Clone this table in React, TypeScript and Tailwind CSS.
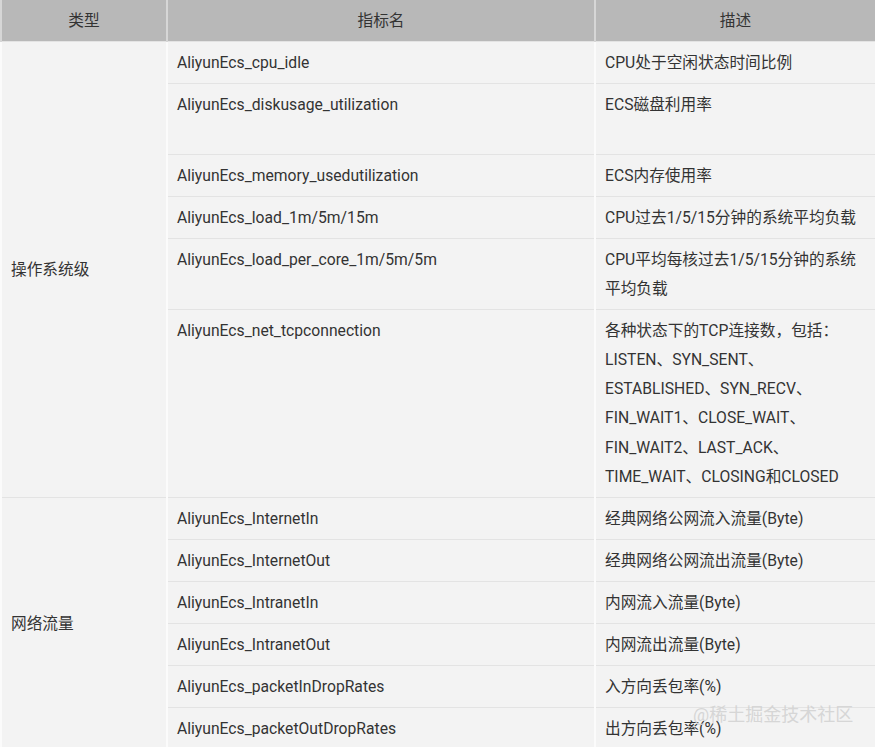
type Row = { name: string; desc: string[] };

const osRows: Row[] = [
  { name: 'AliyunEcs_cpu_idle', desc: ['CPU处于空闲状态时间比例'] },
  { name: 'AliyunEcs_diskusage_utilization', desc: ['ECS磁盘利用率', '\u00a0'] },
  { name: 'AliyunEcs_memory_usedutilization', desc: ['ECS内存使用率'] },
  { name: 'AliyunEcs_load_1m/5m/15m', desc: ['CPU过去1/5/15分钟的系统平均负载'] },
  { name: 'AliyunEcs_load_per_core_1m/5m/5m', desc: ['CPU平均每核过去1/5/15分钟的系统', '平均负载'] },
  {
    name: 'AliyunEcs_net_tcpconnection',
    desc: [
      '各种状态下的TCP连接数，包括：',
      'LISTEN、SYN_SENT、',
      'ESTABLISHED、SYN_RECV、',
      'FIN_WAIT1、CLOSE_WAIT、',
      'FIN_WAIT2、LAST_ACK、',
      'TIME_WAIT、CLOSING和CLOSED',
    ],
  },
];

const netRows: Row[] = [
  { name: 'AliyunEcs_InternetIn', desc: ['经典网络公网流入流量(Byte)'] },
  { name: 'AliyunEcs_InternetOut', desc: ['经典网络公网流出流量(Byte)'] },
  { name: 'AliyunEcs_IntranetIn', desc: ['内网流入流量(Byte)'] },
  { name: 'AliyunEcs_IntranetOut', desc: ['内网流出流量(Byte)'] },
  { name: 'AliyunEcs_packetInDropRates', desc: ['入方向丢包率(%)'] },
  { name: 'AliyunEcs_packetOutDropRates', desc: ['出方向丢包率(%)'] },
];

const cell = 'border-x-2 border-x-[#fbfbfb] border-y border-y-[#e3e3e3] px-[9px] py-[6px]';

function Group({ label, rows }: { label: string; rows: Row[] }) {
  return (
    <>
      {rows.map((r, i) => (
        <tr key={r.name}>
          {i === 0 && (
            <td rowSpan={rows.length} className={`${cell} align-middle`}>
              {label}
            </td>
          )}
          <td className={`${cell} align-top`}>{r.name}</td>
          <td className={`${cell} align-top`}>
            {r.desc.map((d, j) => (
              <div key={j}>{d}</div>
            ))}
          </td>
        </tr>
      ))}
    </>
  );
}

export default function App() {
  return (
    <div
      className="relative h-[747px] w-[875px] overflow-hidden bg-white text-[15.7px] leading-[29.1px] text-[#333]"
      style={{ fontFamily: 'Roboto, "Noto Sans CJK SC", sans-serif' }}
    >
      <table className="w-[875px] table-fixed border-collapse bg-[#f3f3f3]">
        <colgroup>
          <col className="w-[166px]" />
          <col className="w-[428px]" />
          <col className="w-[281px]" />
        </colgroup>
        <thead>
          <tr className="h-[41px] bg-[#b8b8b8]">
            <th className="border-x-2 border-x-[#d6d6d6] px-[9px] text-center font-normal">类型</th>
            <th className="border-x-2 border-x-[#d6d6d6] px-[9px] text-center font-normal">指标名</th>
            <th className="border-x-2 border-x-[#d6d6d6] px-[9px] text-center font-normal">描述</th>
          </tr>
        </thead>
        <tbody>
          <Group label="操作系统级" rows={osRows} />
          <Group label="网络流量" rows={netRows} />
        </tbody>
      </table>
      <div className="absolute left-[693px] top-[703px] text-[18px] leading-[24px] text-[#d2d2d2]/90">
        @稀土掘金技术社区
      </div>
    </div>
  );
}
